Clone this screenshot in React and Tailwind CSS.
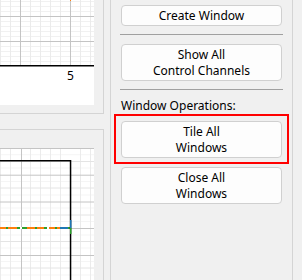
const FONT = { fontFamily: '"Noto Sans", "Open Sans", Arial, sans-serif' };

const VX = [0, 10, 30, 40, 50, 60, 80, 90];

// segments of the noisy trace: [x, width, colour]
const TRACE = [
  [0, 6, '#ff7f0e'], [6, 2, '#2ca02c'], [8, 9, '#ff7f0e'], [17, 3, '#2ca02c'],
  [20, 2, '#ffffff'], [22, 5, '#2ca02c'], [27, 8, '#ff7f0e'], [35, 2, '#2ca02c'],
  [37, 7, '#ff7f0e'], [44, 3, '#2ca02c'], [47, 2, '#ffffff'], [49, 6, '#ff7f0e'],
  [55, 2, '#2ca02c'], [57, 3, '#ff7f0e'], [60, 8, '#1f77b4'], [68, 2, '#2ca02c'],
];

function TopPlot() {
  const minorY = [1, 6, 11, 21, 26, 31, 36, 46, 51, 56, 61];
  return (
    <svg width="94" height="105" className="block bg-white">
      {minorY.map((y) => (
        <line key={y} x1="0" x2="94" y1={y + 0.5} y2={y + 0.5} stroke="#f1f1f1" />
      ))}
      {VX.map((x) => (
        <line key={x} x1={x + 0.5} x2={x + 0.5} y1="0" y2="65" stroke="#ebebeb" />
      ))}
      <line x1="0" x2="94" y1="16.5" y2="16.5" stroke="#c4c4c4" />
      <line x1="0" x2="94" y1="41.5" y2="41.5" stroke="#c4c4c4" />
      <line x1="20.5" x2="20.5" y1="0" y2="65" stroke="#c4c4c4" />
      <line x1="70.5" x2="70.5" y1="0" y2="65" stroke="#c4c4c4" />
      <rect x="70" y="0" width="1" height="1" fill="#ff7f0e" />
      <rect x="0" y="65" width="94" height="1.5" fill="#000" />
      <text x="70.5" y="80" textAnchor="middle" fontSize="12" fill="#000" style={FONT}>
        5
      </text>
    </svg>
  );
}

function BottomPlot() {
  const major = [0, 26.7, 53.5, 80, 107];
  const minor = [13.5, 40, 67, 93.5, 120];
  return (
    <svg width="94" height="132" className="block bg-white">
      {[6.7, 20, 33.5, 47, 60, 73.5, 87, 100, 113.5, 127].map((y) => (
        <line key={y} x1="0" x2="94" y1={y} y2={y} stroke="#f5f5f5" />
      ))}
      {VX.map((x) => (
        <line key={x} x1={x + 0.5} x2={x + 0.5} y1="0" y2="132" stroke="#ebebeb" />
      ))}
      {minor.map((y) => (
        <line key={y} x1="0" x2="94" y1={y} y2={y} stroke="#e4e4e4" />
      ))}
      {major.map((y) => (
        <line key={y} x1="0" x2="94" y1={y + 0.5} y2={y + 0.5} stroke="#c4c4c4" />
      ))}
      <line x1="21.5" x2="21.5" y1="0" y2="132" stroke="#c4c4c4" />
      {TRACE.map(([x, w, c]) => (
        <rect key={x} x={x} y="79" width={w} height="2" fill={c} />
      ))}
      <rect x="0" y="12" width="70.5" height="1.5" fill="#000" />
      <rect x="69.8" y="12" width="1.5" height="120" fill="#000" />
      <rect x="70" y="72" width="1.5" height="8" fill="#1f77b4" />
      <rect x="70" y="80" width="1.5" height="6" fill="#2ca02c" />
    </svg>
  );
}

function Button({ children, tall }) {
  return (
    <button
      className={`flex w-full items-center justify-center rounded-[4px] border border-[#d0d0d0] bg-[#fdfdfd] text-center text-[12px] leading-[16px] text-black ${
        tall ? 'h-[37px]' : 'h-[21px]'
      }`}
      style={FONT}
    >
      <span>{children}</span>
    </button>
  );
}

export default function App() {
  return (
    <div className="flex h-[280px] w-[302px] overflow-hidden bg-[#f0f0f0]" style={FONT}>
      <div className="flex w-[104px] shrink-0 flex-col">
        <div className="border-b border-r border-[#d4d4d4] pb-[8px] pr-[9px]">
          <TopPlot />
        </div>
        <div className="mt-[15px] flex-1 border-r border-t border-[#d4d4d4] pr-[9px] pt-[18px]">
          <BottomPlot />
        </div>
      </div>

      <div className="ml-[6px] flex w-[183px] shrink-0 flex-col border-x border-[#d4d4d4] px-[10px] pt-[5px]">
        <Button>Create Window</Button>
        <div className="-mx-px mt-[8px] h-px bg-[#a0a0a0]" />
        <div className="mt-[9px]">
          <Button tall>
            Show All
            <br />
            Control Channels
          </Button>
        </div>
        <div className="-mx-px mt-[8px] h-px bg-[#a0a0a0]" />
        <p className="mt-[8px] text-[12px] leading-[16px] text-black">Window Operations:</p>
        <div className="relative mt-[7px]">
          <div className="pointer-events-none absolute -bottom-[6px] -left-[7px] -right-[7px] -top-[7px] border-2 border-[#ff0000]" />
          <Button tall>
            Tile All
            <br />
            Windows
          </Button>
        </div>
        <div className="mt-[9px]">
          <Button tall>
            Close All
            <br />
            Windows
          </Button>
        </div>
      </div>
    </div>
  );
}
